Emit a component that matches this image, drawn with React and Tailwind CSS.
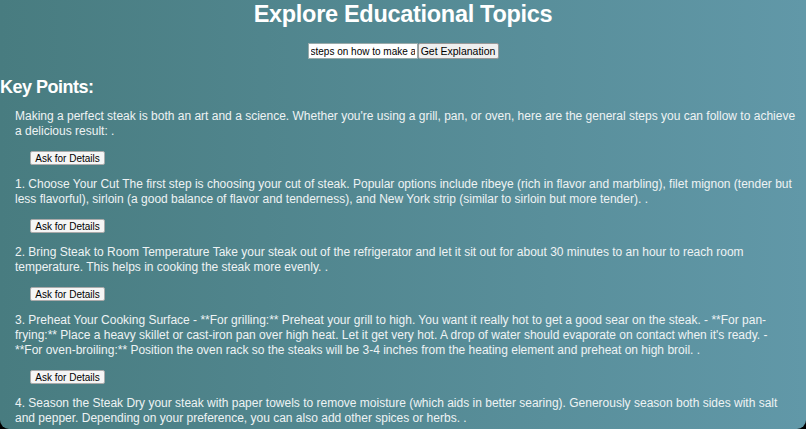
import React, { useState } from "react";

const points = [
  "Making a perfect steak is both an art and a science. Whether you're using a grill, pan, or oven, here are the general steps you can follow to achieve a delicious result: .",
  "1. Choose Your Cut The first step is choosing your cut of steak. Popular options include ribeye (rich in flavor and marbling), filet mignon (tender but less flavorful), sirloin (a good balance of flavor and tenderness), and New York strip (similar to sirloin but more tender). .",
  "2. Bring Steak to Room Temperature Take your steak out of the refrigerator and let it sit out for about 30 minutes to an hour to reach room temperature. This helps in cooking the steak more evenly. .",
  "3. Preheat Your Cooking Surface - **For grilling:** Preheat your grill to high. You want it really hot to get a good sear on the steak. - **For pan-frying:** Place a heavy skillet or cast-iron pan over high heat. Let it get very hot. A drop of water should evaporate on contact when it's ready. - **For oven-broiling:** Position the oven rack so the steaks will be 3-4 inches from the heating element and preheat on high broil. .",
  "4. Season the Steak Dry your steak with paper towels to remove moisture (which aids in better searing). Generously season both sides with salt and pepper. Depending on your preference, you can also add other spices or herbs. .",
];

const App = () => {
  const [topic, setTopic] = useState("steps on how to make a steak");

  return (
    <div className="h-screen w-full bg-black overflow-hidden">
      <div
        className="h-full w-full overflow-hidden rounded-b-[9px] bg-linear-to-r from-[#487c80] to-[#6198a8] text-[#eef3f4]"
        style={{ fontFamily: "'Liberation Sans', Arial, sans-serif" }}
      >
        {/* header */}
        <h1 className="m-0 text-center text-[23.5px] font-bold leading-[29px] tracking-[-0.3px] text-white">
          Explore Educational Topics
        </h1>
        <div className="mt-[14px] flex justify-center">
          <input
            value={topic}
            onChange={(e) => setTopic(e.target.value)}
            className="h-[16px] w-[110px] border border-[#9aa] bg-white px-[2px] text-[10px] leading-[14px] text-black outline-none"
          />
          <button className="h-[16px] w-[81px] rounded-[2px] border border-[#999] bg-[#efefef] text-[10.5px] leading-[14px] text-black">
            Get Explanation
          </button>
        </div>

        {/* key points */}
        <h2 className="m-0 mt-[17px] text-[18px] font-bold leading-[22px] tracking-[-0.5px] text-white">
          Key Points:
        </h2>
        <div className="pl-[15px] pr-[9px] pt-[11px]">
          {points.map((text, index) => (
            <div key={index}>
              <p className="m-0 text-[12px] leading-[15px]">{text}</p>
              {index < points.length - 1 && (
                <div className="py-[12px] pl-[15px]">
                  <button className="flex h-[14px] w-[75px] items-center justify-center rounded-[2px] border border-[#aaa] bg-[#f5f5f5] text-[10px] text-black">
                    Ask for Details
                  </button>
                </div>
              )}
            </div>
          ))}
        </div>
      </div>
    </div>
  );
};

export default App;
